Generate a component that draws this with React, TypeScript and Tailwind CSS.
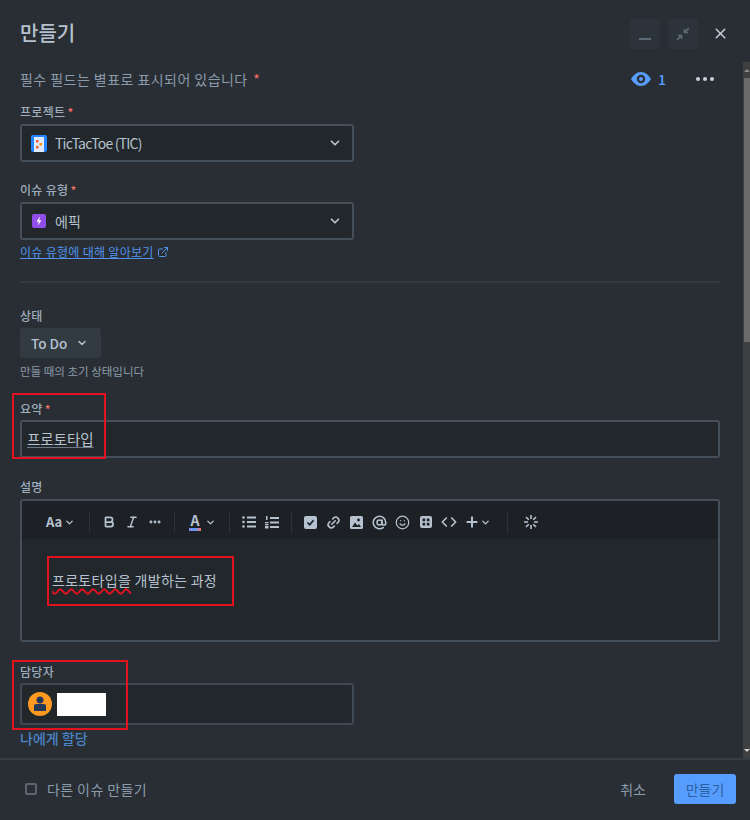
import React from "react";
import { ChevronDown, X, Bold, Italic, Ellipsis, Link2, AtSign, Smile, Code, Plus, ExternalLink } from "lucide-react";

const F = "[font-family:'Noto_Sans_CJK_KR','Noto_Sans',sans-serif]";

function Star() {
  return <span className="text-[#f87168] ml-[2px]">*</span>;
}

function Label({ children, star }: { children: React.ReactNode; star?: boolean }) {
  return (
    <div className="h-4 text-[12px] leading-4 tracking-[0.3px] font-medium text-[#9fadbc]">
      {children}
      {star && <Star />}
    </div>
  );
}

function Select({ icon, text, textClass }: { icon: React.ReactNode; text: string; textClass?: string }) {
  return (
    <div className="mt-1 w-[334px] h-[38px] rounded-[3px] border-2 border-[#454f59] bg-[#22272b] flex items-center pl-[8px] pr-[10px]">
      <span className="w-[17px] h-[17px] flex items-center justify-center">{icon}</span>
      <span className={`ml-[8px] text-[14px] text-[#b6c2cf] flex-1 ${textClass ?? ""}`}>{text}</span>
      <ChevronDown size={14} strokeWidth={3} className="text-[#b6c2cf]" />
    </div>
  );
}

function Sep() {
  return <span className="w-px h-[22px] bg-[#2c3238]" />;
}

function Cell({ children }: { children: React.ReactNode }) {
  return <span className="w-[23px] h-[20px] flex items-center justify-center">{children}</span>;
}

function Red({ className }: { className: string }) {
  return <div className={`absolute border-[2px] border-[#e2121f] ${className}`} />;
}

export default function App() {
  return (
    <div className={`relative w-[750px] h-[820px] bg-[#282e33] flex flex-col overflow-hidden ${F}`}>
      <header className="h-[62px] shrink-0 flex items-center pl-5 pr-[21px]">
        <h1 className="text-[20px] font-medium text-[#b6c2cf] flex-1 mt-[4px]">만들기</h1>
        <div className="flex items-center mt-[5px]">
          <span className="w-[30px] h-[30px] rounded-[3px] bg-[#2c333a] flex items-end justify-center pb-[9px]">
            <span className="w-[12px] h-[2px] bg-[#5d6b78]" />
          </span>
          <span className="ml-[8px] w-[30px] h-[30px] rounded-[3px] bg-[#2c333a] flex items-center justify-center text-[#5d6b78]">
            <svg width="16" height="16" viewBox="0 0 16 16" fill="none" stroke="currentColor" strokeWidth="1.6">
              <path d="M14 2 9.5 6.5M9.5 3v3.5H13M2 14l4.5-4.5M3 9.5h3.5V13" />
            </svg>
          </span>
          <X size={17} strokeWidth={2} className="ml-[14px] text-[#c7d1db]" />
        </div>
      </header>

      <div className="flex-1 min-h-0 flex">
        <main className="flex-1 min-w-0 pl-5 pr-[23px]">
          <div className="h-[34px] flex items-center text-[14px] tracking-[0.45px] text-[#8c9bab]">
            <span className="flex-1">
              필수 필드는 별표로 표시되어 있습니다 <Star />
            </span>
            <svg width="20" height="14" viewBox="0 0 20 14" className="text-[#579dff]">
              <path
                fill="currentColor"
                fillRule="evenodd"
                d="M10 0c4.5 0 8 3.4 10 7-2 3.600-5.500 7-10 7S2 10.600 0 7c2-3.600 5.500-7 10-7zm0 2.800a4.200 4.200 0 1 0 0 8.400 4.200 4.200 0 0 0 0-8.400zm0 2.200a2 2 0 1 1 0 4 2 2 0 0 1 0-4z"
              />
            </svg>
            <span className="ml-[7px] text-[14px] font-medium text-[#579dff] w-[6px]">1</span>
            <span className="ml-[32px] mr-[6px] flex gap-[3px]">
              <span className="w-[4px] h-[4px] rounded-full bg-[#c7d1db]" />
              <span className="w-[4px] h-[4px] rounded-full bg-[#c7d1db]" />
              <span className="w-[4px] h-[4px] rounded-full bg-[#c7d1db]" />
            </span>
          </div>

          <div className="mt-[8px]">
            <Label star>프로젝트</Label>
            <Select
              text="TicTacToe (TIC)"
              textClass="tracking-[-0.8px]"
              icon={
                <svg width="16" height="17" viewBox="0 0 16 17">
                  <rect width="16" height="17" rx="2" fill="#2684ff" />
                  <rect x="3" y="2" width="10" height="15" fill="#deebff" />
                  <rect x="5" y="5" width="2.5" height="2.5" fill="#ff5630" />
                  <rect x="8.500" y="8" width="2.500" height="2.500" fill="#ff8b00" />
                  <rect x="5" y="11" width="2.500" height="2.500" fill="#ff5630" />
                </svg>
              }
            />
          </div>

          <div className="mt-[20px]">
            <Label star>이슈 유형</Label>
            <Select
              text="에픽"
              icon={
                <svg width="14" height="14" viewBox="0 0 14 14">
                  <rect width="14" height="14" rx="2" fill="#8f4ee8" />
                  <path d="M8 2.500 4.500 7.700h2.300L6 11.500l3.500-5.200H7.200z" fill="#fff" />
                </svg>
              }
            />
            <div className="mt-[4px] h-4 flex items-center text-[12px] tracking-[0.3px] text-[#579dff] opacity-90">
              <span className="underline">이슈 유형에 대해 알아보기</span>
              <ExternalLink size={12} strokeWidth={2} className="ml-[3px]" />
            </div>
          </div>

          <div className="mt-[21px] h-[2px] bg-[#323a40]" />

          <div className="mt-[25px]">
            <Label>상태</Label>
            <div className="mt-[4px] w-[81px] h-[30px] rounded-[3px] bg-[#333b42] flex items-center pl-[11px] text-[13.5px] font-medium text-[#b6c2cf]">
              To Do
              <ChevronDown size={12} strokeWidth={3} className="ml-[9px]" />
            </div>
            <div className="mt-[5px] h-4 text-[11.5px] leading-4 text-[#8c9bab]">만들 때의 초기 상태입니다</div>
          </div>

          <div className="mt-[22px]">
            <Label star>요약</Label>
            <div className="mt-[3px] h-[38px] rounded-[3px] border-2 border-[#454f59] bg-[#22272b] flex items-center pl-[5px] text-[14.5px] text-[#b6c2cf]">
              <span className="underline underline-offset-2 decoration-[#6b7886]">프로토타입</span>
            </div>
          </div>

          <div className="mt-[21px]">
            <Label>설명</Label>
            <div className="mt-1 h-[143px] rounded-[3px] border-2 border-[#454f59] bg-[#22272b] overflow-hidden">
              <div className="h-[38px] bg-[#1d2125] flex items-center pl-[24px] pt-[4px] text-[#b6c2cf]">
                <span className="w-[18px] text-[13px] font-semibold">Aa</span>
                <ChevronDown size={11} strokeWidth={3} className="mr-[14px]" />
                <Sep />
                <span className="w-[7px]" />
                <Cell><Bold size={14} strokeWidth={3} /></Cell>
                <Cell><Italic size={14} strokeWidth={2.500} /></Cell>
                <Cell><Ellipsis size={14} strokeWidth={3} /></Cell>
                <span className="w-[8px]" />
                <Sep />
                <span className="ml-[13px] w-[14px] h-[18px] flex flex-col items-center">
                  <span className="text-[14px] leading-[15px] font-semibold">A</span>
                  <span className="w-[12px] h-[3px] bg-[linear-gradient(90deg,#8f7ee7,#579dff_50%,#f87168)]" />
                </span>
                <ChevronDown size={11} strokeWidth={3} className="ml-[3px] mr-[13px]" />
                <Sep />
                <span className="w-[7px]" />
                <Cell>
                  <svg width="14" height="12" viewBox="0 0 14 12" fill="currentColor">
                    <circle cx="1.500" cy="1.500" r="1.300" />
                    <circle cx="1.500" cy="6" r="1.300" />
                    <circle cx="1.500" cy="10.500" r="1.300" />
                    <rect x="5" y="0.500" width="9" height="2" />
                    <rect x="5" y="5" width="9" height="2" />
                    <rect x="5" y="9.500" width="9" height="2" />
                  </svg>
                </Cell>
                <Cell>
                  <svg width="14" height="13" viewBox="0 0 14 13" fill="currentColor">
                    <rect x="1" y="0" width="1.500" height="4" />
                    <rect x="0" y="6" width="3.500" height="1.300" />
                    <rect x="0" y="8" width="3.500" height="1.300" />
                    <rect x="0" y="10" width="3.500" height="2.500" />
                    <rect x="5" y="1" width="9" height="2" />
                    <rect x="5" y="5.500" width="9" height="2" />
                    <rect x="5" y="10" width="9" height="2" />
                  </svg>
                </Cell>
                <span className="w-[8px]" />
                <Sep />
                <span className="w-[7px]" />
                <Cell>
                  <svg width="13" height="13" viewBox="0 0 13 13">
                    <rect width="13" height="13" rx="2" fill="currentColor" />
                    <path d="M3.500 6.500 5.700 8.800 9.500 4.200" fill="none" stroke="#1d2125" strokeWidth="1.700" />
                  </svg>
                </Cell>
                <Cell><Link2 size={15} strokeWidth={2.500} className="-rotate-45" /></Cell>
                <Cell>
                  <svg width="13" height="13" viewBox="0 0 13 13">
                    <rect width="13" height="13" rx="1.500" fill="currentColor" />
                    <circle cx="8.500" cy="4" r="1.400" fill="#1d2125" />
                    <path d="M2 11 5 6.500 7.500 9.500 9 8 11 11z" fill="#1d2125" />
                  </svg>
                </Cell>
                <Cell><AtSign size={15} strokeWidth={2.500} /></Cell>
                <Cell><Smile size={15} strokeWidth={2} /></Cell>
                <Cell>
                  <svg width="14" height="14" viewBox="0 0 14 14" fill="currentColor">
                    <path fillRule="evenodd" d="M3 1h8a2 2 0 0 1 2 2v8a2 2 0 0 1-2 2H3a2 2 0 0 1-2-2V3a2 2 0 0 1 2-2zm.5 2.500v2.700h2.700V3.500zm4.300 0v2.700h2.700V3.500zM3.500 7.800v2.700h2.700V7.800zm4.300 0v2.700h2.700V7.800z" />
                  </svg>
                </Cell>
                <Cell><Code size={16} strokeWidth={2.500} /></Cell>
                <Cell><Plus size={16} strokeWidth={3} /></Cell>
                <ChevronDown size={11} strokeWidth={3} className="-ml-[3px] mr-[16px]" />
                <Sep />
                <span className="w-[11px]" />
                <Cell>
                  <svg width="16" height="16" viewBox="0 0 16 16" fill="none" stroke="currentColor" strokeWidth="1.600">
                    <path d="M8 1v4M8 11v4M1 8h4M11 8h4M3 3l2.800 2.800M10.200 10.200 13 13M13 3l-2.800 2.800M5.800 10.200 3 13" />
                  </svg>
                </Cell>
              </div>
              <div className="pl-[30px] pt-[31px] text-[14px] tracking-[0.3px] leading-[20px] text-[#b6c2cf]">
                <span className="underline decoration-wavy decoration-[#e2121f] decoration-[1.5px] underline-offset-2">프로토타입을</span> 개발하는 과정
              </div>
            </div>
          </div>

          <div className="mt-[22px]">
            <Label>담당자</Label>
            <div className="mt-[3px] w-[334px] h-[42px] rounded-[3px] border-2 border-[#3f4a54] bg-[#22272b] flex items-center pl-[6px]">
              <span className="w-[24px] h-[24px] rounded-full bg-[#ff991f] flex items-center justify-center">
                <svg width="14" height="18" viewBox="0 0 14 18" fill="#253858">
                  <circle cx="7" cy="5" r="3.500" />
                  <path d="M1 11a2 2 0 0 1 2-2h8a2 2 0 0 1 2 2v5H1z" />
                </svg>
              </span>
              <span className="ml-[5px] w-[49px] h-[23px] bg-white" />
            </div>
            <div className="mt-[3px] text-[14px] leading-[20px] font-medium text-[#4b84c7]">나에게 할당</div>
          </div>
        </main>

        <aside className="w-[7px] shrink-0 bg-[#3e3f40] flex flex-col">
          <div className="h-[16px] flex items-center justify-center pl-[1px]">
            <span className="w-0 h-0 border-x-[3px] border-x-transparent border-b-[3px] border-b-[#8a8a8a]" />
          </div>
          <div className="ml-px h-[264px] bg-[#6b6b6b]" />
          <div className="mt-auto h-[16px] flex items-center justify-center pl-[1px]">
            <span className="w-0 h-0 border-x-[3px] border-x-transparent border-t-[3px] border-t-[#d0d0d0]" />
          </div>
        </aside>
      </div>

      <footer className="h-[62px] shrink-0 border-t-2 border-[#363d44] flex items-center pl-[25px] pr-[14px] pb-[2px]">
        <span className="w-[12px] h-[12px] rounded-[2px] border-2 border-[#5a6570]" />
        <span className="ml-[10px] flex-1 text-[14px] tracking-[0.4px] text-[#8c9bab]">다른 이슈 만들기</span>
        <span className="text-[14px] text-[#8c9bab]">취소</span>
        <span className="ml-[28px] w-[62px] h-[30px] rounded-[3px] bg-[#579dff] flex items-center justify-center text-[14px] text-[#2c5f9e]">만들기</span>
      </footer>

      <Red className="left-[12px] top-[393px] w-[94px] h-[66px]" />
      <Red className="left-[47px] top-[556px] w-[187px] h-[50px]" />
      <Red className="left-[12px] top-[660px] w-[116px] h-[70px]" />
    </div>
  );
}
